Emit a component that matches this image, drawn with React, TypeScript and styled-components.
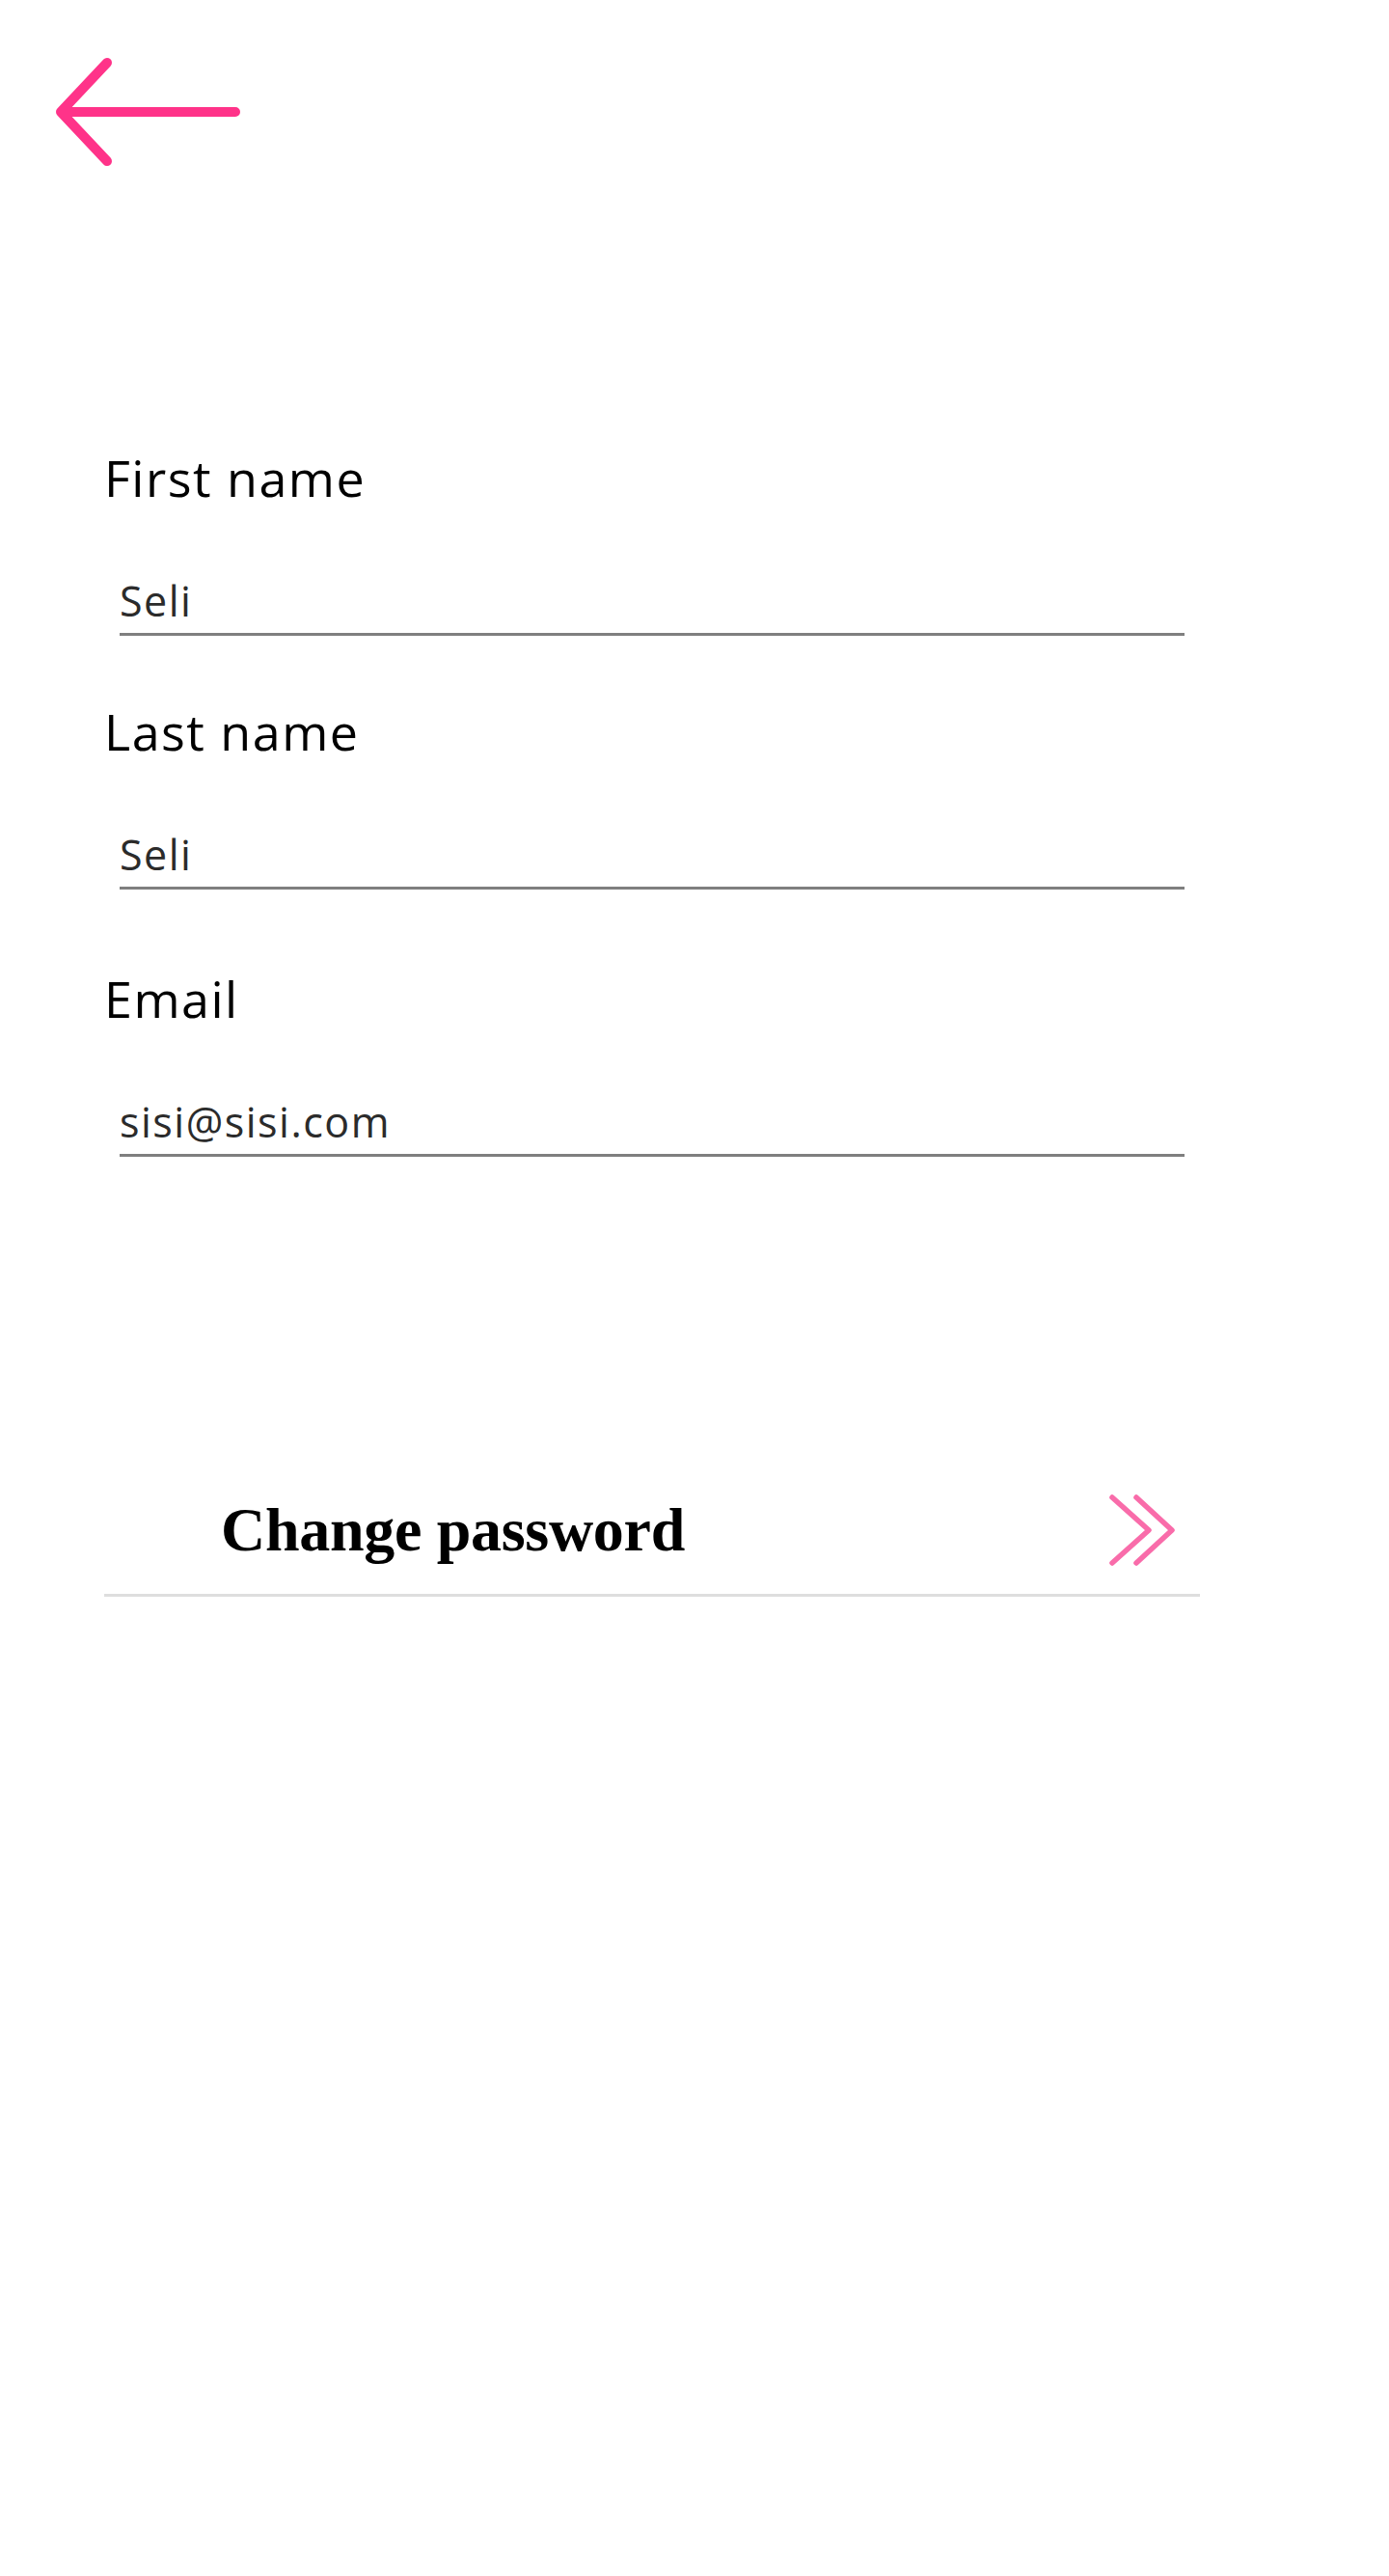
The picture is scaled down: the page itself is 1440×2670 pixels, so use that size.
import React from "react";
import styled, { createGlobalStyle } from "styled-components";

interface FieldProps {
	spaced?: boolean;
}

const GlobalStyle = createGlobalStyle`
	html, body {
		margin: 0;
		padding: 0;
		background: #ffffff;
	}
	body {
		font-family: "Open Sans", "Noto Sans", sans-serif;
		color: #000;
	}
`;

const Page = styled.div`
	width: 1440px;
	min-height: 2670px;
	background: #ffffff;
	display: flex;
	flex-direction: column;
`;

const Header = styled.header`
	padding: 50px 0 0 55px;
	display: flex;
`;

const BackButton = styled.button`
	border: none;
	background: none;
	padding: 0;
	cursor: pointer;
	display: flex;
	svg {
		display: block;
	}
`;

const Form = styled.form`
	margin: 285px 0 0 108px;
	width: 1136px;
	display: flex;
	flex-direction: column;
`;

const Field = styled.div<FieldProps>`
	display: flex;
	flex-direction: column;
	gap: 68px;
	margin-top: ${(props) => (props.spaced ? "83px" : "69px")};
	&:first-child {
		margin-top: 0;
	}
`;

const Label = styled.label`
	font-family: "Open Sans", "Noto Sans", sans-serif;
	font-size: 52px;
	line-height: 60px;
	letter-spacing: 1.5px;
	font-weight: 400;
	color: #000;
`;

const Input = styled.input`
	margin: 0 16px;
	box-sizing: content-box;
	height: 52px;
	padding: 3px 0 8px 0;
	border: none;
	border-bottom: 3px solid #7f7f7f;
	outline: none;
	background: transparent;
	font-family: "Open Sans", "Noto Sans", sans-serif;
	font-size: 43px;
	letter-spacing: 1.5px;
	color: #2b2b2b;
`;

const PasswordRow = styled.a`
	margin-top: 349px;
	padding: 0 24px 28px 121px;
	display: flex;
	align-items: center;
	justify-content: space-between;
	border-bottom: 3px solid #dedede;
	text-decoration: none;
	color: #000;
	cursor: pointer;
`;

const PasswordText = styled.span`
	font-family: "Liberation Serif", "Times New Roman", serif;
	font-weight: 700;
	font-size: 64px;
	line-height: 64px;
	letter-spacing: -0.3px;
`;

function App() {
	return (
		<Page>
			<GlobalStyle />
			<Header>
				<BackButton type="button" aria-label="Back">
					<svg width="200" height="130" viewBox="0 0 200 130" fill="none">
						<path
							d="M56 15 L8 66 L56 117 M8 66 H189"
							stroke="#ff3389"
							strokeWidth={10}
							strokeLinecap="round"
							strokeLinejoin="round"
						/>
					</svg>
				</BackButton>
			</Header>

			<Form onSubmit={(e) => e.preventDefault()}>
				<Field>
					<Label htmlFor="first">First name</Label>
					<Input id="first" defaultValue="Seli" />
				</Field>
				<Field>
					<Label htmlFor="last">Last name</Label>
					<Input id="last" defaultValue="Seli" />
				</Field>
				<Field spaced>
					<Label htmlFor="email">Email</Label>
					<Input id="email" defaultValue="sisi@sisi.com" />
				</Field>

				<PasswordRow>
					<PasswordText>Change password</PasswordText>
					{/* double chevron */}
					<svg width="72" height="76" viewBox="0 0 72 76" fill="none">
						<path
							d="M5 4 L43 38 L5 72 M30 4 L67 38 L30 72"
							stroke="#f96caa"
							strokeWidth={5.5}
							strokeLinecap="round"
							strokeLinejoin="round"
						/>
					</svg>
				</PasswordRow>
			</Form>
		</Page>
	);
}

export default App;
